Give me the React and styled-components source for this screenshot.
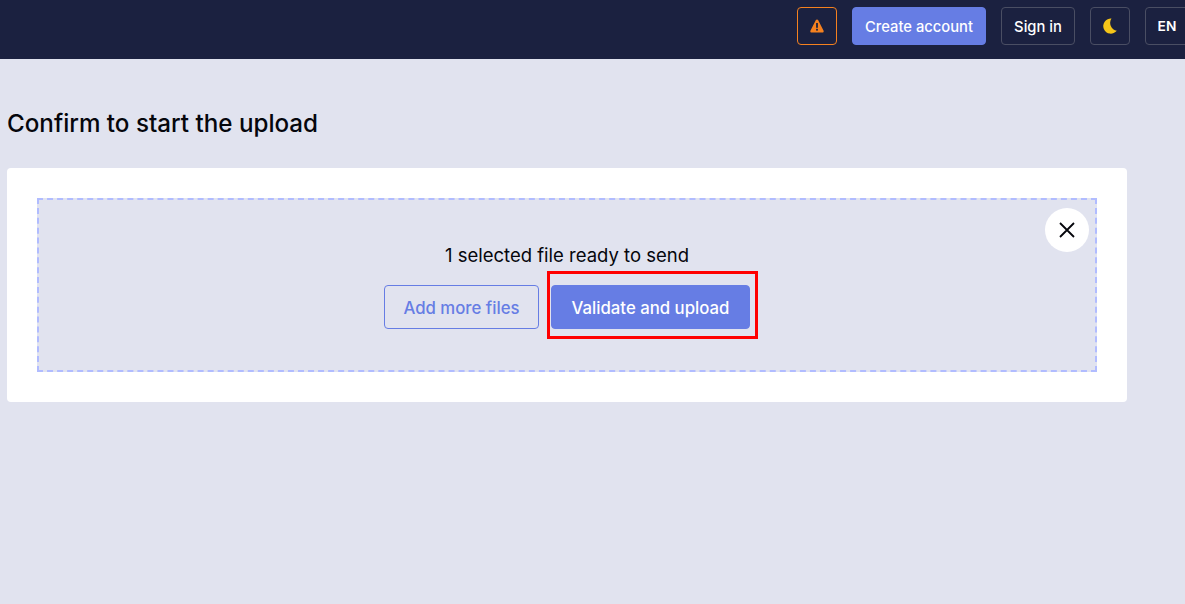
import React from 'react';
import styled, { createGlobalStyle } from 'styled-components';

const GlobalStyle = createGlobalStyle`
  html, body {
    margin: 0;
    height: 100%;
    overflow: hidden;
    background-color: #e1e3ef;
    font-family: "Inter", "Liberation Sans", sans-serif;
    color: #05060c;
  }
  * {
    box-sizing: border-box;
  }
`;

const Header = styled.header`
  height: 59px;
  background-color: #1b2140;
  display: flex;
  align-items: flex-start;
  justify-content: flex-start;
  gap: 15px;
  padding: 7px 0 0 797px;
  width: 1240px;
`;

const NavButton = styled.button`
  height: 38px;
  width: ${p => p.$width}px;
  flex: none;
  display: flex;
  align-items: center;
  justify-content: center;
  padding: ${p => (p.$text ? '1px 0 0' : '0')};
  background: ${p => (p.$primary ? '#667de4' : 'transparent')};
  border: 1px solid ${p => (p.$primary ? '#667de4' : p.$warning ? '#f5811f' : '#4a4e63')};
  border-radius: 4px;
  color: #ffffff;
  font-family: inherit;
  font-size: ${p => p.$size || 14.75}px;
  font-weight: ${p => p.$weight || 500};
`;

const Main = styled.main`
  padding: 48px 0 0 7px;
  width: 1127px;
`;

const Title = styled.h1`
  margin: 0 0 28px;
  font-size: 24.2px;
  line-height: 33px;
  font-weight: 500;
`;

const Card = styled.section`
  background-color: #ffffff;
  border-radius: 4px;
  padding: 30px;
`;

const DropZone = styled.div`
  position: relative;
  height: 174px;
  border: 2px dashed #b1bcff;
  background-color: #e1e3ef;
  display: flex;
  flex-direction: column;
  align-items: center;
  padding-top: 44px;
`;

const CloseButton = styled.button`
  position: absolute;
  top: 8px;
  right: 6px;
  width: 44px;
  height: 44px;
  border-radius: 50%;
  border: 0;
  padding: 0;
  background-color: #ffffff;
  display: flex;
  align-items: center;
  justify-content: center;
`;

const Status = styled.p`
  margin: 0 0 18px;
  font-size: 18.5px;
  line-height: 23px;
  font-weight: 400;
`;

const Actions = styled.div`
  display: flex;
  gap: 12px;
`;

const ActionButton = styled.button`
  height: 44px;
  width: ${p => p.$width}px;
  padding: 1px 0 0;
  border-radius: 4px;
  border: 1px solid #667de4;
  background: ${p => (p.$primary ? '#667de4' : 'transparent')};
  color: ${p => (p.$primary ? '#ffffff' : '#667de4')};
  font-family: inherit;
  font-size: 16.75px;
  font-weight: 500;
`;

const Highlighted = styled.div`
  position: relative;

  &::after {
    content: '';
    position: absolute;
    top: -14px;
    left: -4px;
    right: -8px;
    bottom: -10px;
    border: 3px solid #ff0000;
    pointer-events: none;
  }
`;

const WarningIcon = () => (
  <svg width="14" height="14" viewBox="0 0 14 14">
    <path d="M7 .4c.5 0 .9.3 1.100.7l5.500 10.700c.4.800-.2 1.800-1.100 1.800H1.500c-.9 0-1.500-1-1.100-1.800L5.900 1.100C6.100.7 6.500.4 7 .4z" fill="#f5811f" />
    <rect x="6.100" y="4" width="1.800" height="4.800" fill="#1b2140" />
    <rect x="6.100" y="9.800" width="1.800" height="1.800" fill="#1b2140" />
  </svg>
);

const MoonIcon = () => (
  <svg width="14" height="16" viewBox="0 0 14 16">
    <path d="M8.500 .5A7.600 7.600 0 1 0 13.800 12.800A8 8 0 0 1 8.500 .5Z" fill="#f5c518" />
  </svg>
);

const CloseIcon = () => (
  <svg width="18" height="18" viewBox="0 0 18 18">
    <path d="M2 2l14 14M16 2L2 16" stroke="#05060c" strokeWidth="1.800" fill="none" />
  </svg>
);

const App = () => (
  <>
    <GlobalStyle />
    <Header>
      <NavButton $warning $width={40} aria-label="Warning"><WarningIcon /></NavButton>
      <NavButton $primary $text $width={134}>Create account</NavButton>
      <NavButton $text $width={74}>Sign in</NavButton>
      <NavButton $width={40} aria-label="Theme"><MoonIcon /></NavButton>
      <NavButton $width={44} $size={13.75} $weight={600}>EN</NavButton>
    </Header>
    <Main>
      <Title>Confirm to start the upload</Title>
      <Card>
        <DropZone>
          <CloseButton aria-label="Close"><CloseIcon /></CloseButton>
          <Status>1 selected file ready to send</Status>
          <Actions>
            <ActionButton $width={155}>Add more files</ActionButton>
            <Highlighted>
              <ActionButton $primary $width={199}>Validate and upload</ActionButton>
            </Highlighted>
          </Actions>
        </DropZone>
      </Card>
    </Main>
  </>
);

export default App;
